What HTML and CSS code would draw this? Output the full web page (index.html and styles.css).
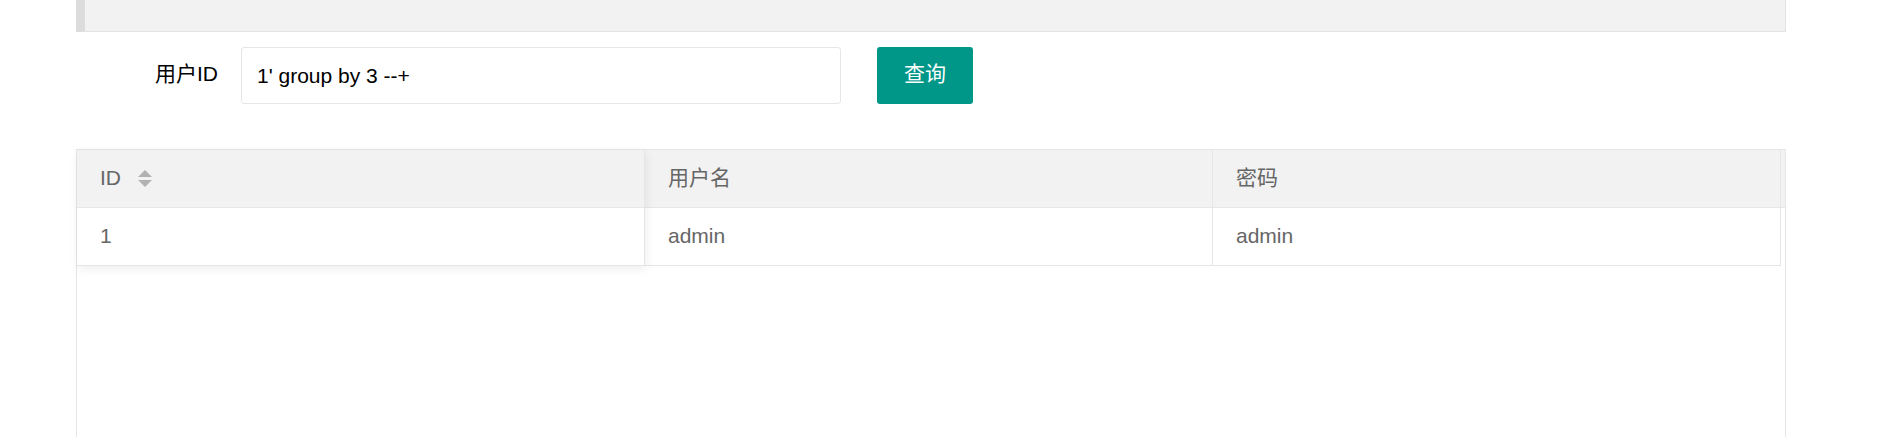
FILE: index.html
```html
<!DOCTYPE html>
<html lang="zh-CN">
<head>
<meta charset="utf-8">
<title>用户查询</title>
<link rel="stylesheet" href="styles.css">
</head>
<body>
<div class="page">
  <div class="quote"></div>

  <form class="form-row" onsubmit="return false">
    <label class="form-label" for="uid">用户ID</label>
    <input class="input" id="uid" type="text" value="1' group by 3 --+">
    <button class="btn" type="submit">查询</button>
  </form>

  <div class="table">
    <div class="col col-fixed">
      <div class="th"><span>ID</span>
        <svg class="sort" width="14" height="17" viewBox="0 0 14 17">
          <polygon points="0,7 7,0 14,7" fill="#b2b2b2"/>
          <polygon points="0,10 14,10 7,17" fill="#b2b2b2"/>
        </svg>
      </div>
      <div class="td">1</div>
    </div>
    <div class="col">
      <div class="th">用户名</div>
      <div class="td">admin</div>
    </div>
    <div class="col">
      <div class="th">密码</div>
      <div class="td">admin</div>
    </div>
    <div class="patch">
      <div class="th th-patch"></div>
    </div>
  </div>
</div>
</body>
</html>
```

FILE: styles.css
```css
* { box-sizing: border-box; }

html, body {
  margin: 0;
  padding: 0;
  background: #fff;
  overflow: hidden;
}

body {
  font-family: "Liberation Sans", "Noto Sans CJK SC", Arial, sans-serif;
  font-size: 21px;
  color: #000;
}

.page {
  width: 1710px;
  margin-left: 76px;
}

.quote {
  height: 32px;
  background: #f2f2f2;
  border-left: 9px solid #dcdcdc;
  border-right: 1px solid #e2e2e2;
  border-bottom: 1px solid #e2e2e2;
}

.form-row {
  display: flex;
  align-items: center;
  margin: 15px 0 0 0;
  height: 57px;
}

.form-label {
  width: 165px;
  padding-right: 23px;
  padding-bottom: 5px;
  line-height: 1;
  text-align: right;
  color: #000;
  font-size: 21px;
}

.input {
  width: 600px;
  height: 57px;
  border: 1px solid #e6e6e6;
  border-radius: 3px;
  padding: 0 15px;
  font-family: "Liberation Sans", "Noto Sans CJK SC", Arial, sans-serif;
  font-size: 21px;
  color: #000;
  background: #fff;
  outline: none;
}

.btn {
  margin-left: 36px;
  width: 96px;
  height: 57px;
  border: none;
  border-radius: 3px;
  background: #009688;
  color: #fff;
  font-family: "Liberation Sans", "Noto Sans CJK SC", Arial, sans-serif;
  font-size: 21px;
  line-height: 1;
  padding: 0 0 5px 0;
}

.table {
  margin-top: 45px;
  display: flex;
  height: 290px;
  border: 1px solid #e6e6e6;
  color: #666;
}

.col {
  width: 568px;
  flex: none;
}

.col-fixed {
  position: relative;
  z-index: 1;
  background: #fff;
  box-shadow: 1px 3px 10px rgba(0, 0, 0, 0.07);
  align-self: flex-start;
}

.th, .td {
  height: 58px;
  display: flex;
  align-items: center;
  padding: 0 22px 3px 23px;
  line-height: 1;
  border-right: 1px solid #e6e6e6;
  border-bottom: 1px solid #e6e6e6;
}

.th {
  background: #f2f2f2;
}

.td {
  background: #fff;
}

.sort {
  margin-left: 17px;
  margin-top: 2px;
}

.patch {
  flex: 1;
}

.th-patch {
  padding: 0;
  border-right: none;
}
```
